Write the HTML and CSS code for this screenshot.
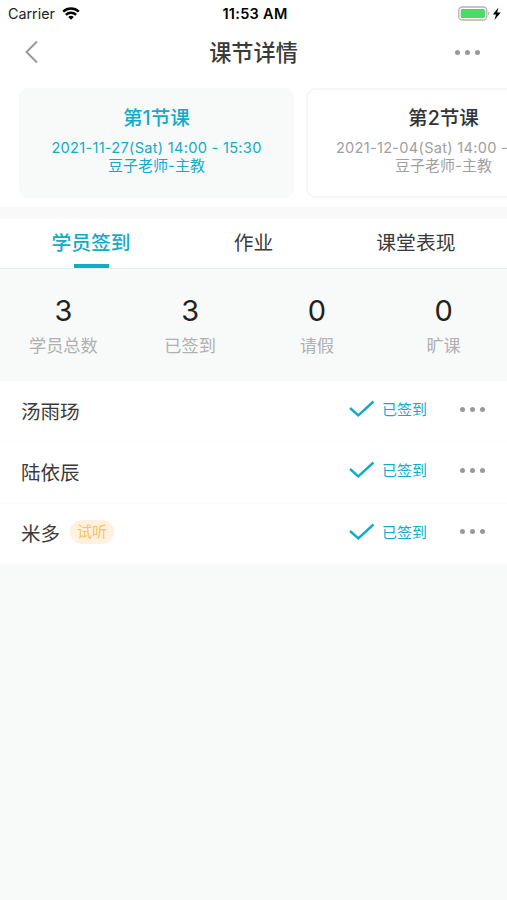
FILE: index.html
```html
<!DOCTYPE html>
<html lang="zh-CN">

<head>
  <meta charset="UTF-8">
  <meta name="viewport" content="width=device-width, initial-scale=1.0">
  <title>课节详情</title>
  <link rel="stylesheet" href="styles.css">
</head>

<body>
  <!-- Status bar -->
  <div class="status-bar">
    <div class="carrier">
      <span>Carrier</span>
      <svg class="wifi" width="18" height="13" viewBox="0 0 18 13" fill="none" stroke="#000" stroke-width="2.5">
        <path d="M1.200 4.700a11.300 11.300 0 0 1 15.600 0" />
        <path d="M3.900 7.800a7.400 7.400 0 0 1 10.200 0" />
        <path d="M9 12.800L6.200 10a4.100 4.100 0 0 1 5.600 0z" fill="#000" stroke="none" />
      </svg>
    </div>
    <div class="time">11:53 AM</div>
    <div class="battery">
      <svg width="44" height="16" viewBox="0 0 44 16">
        <rect x="0.8" y="1" width="28" height="13" rx="3.5" fill="#fff" stroke="#b4b4b4" stroke-width="1.3" />
        <rect x="2.7" y="2.9" width="24.2" height="9.2" rx="1.5" fill="#4cd964" />
        <path d="M30.2 5.3q2.2 2.2 0 4.4z" fill="#aaa" />
        <path d="M40.5 1.500L34.800 8.500h3.200l-1.500 5.500 6.200-7.500h-3.600z" fill="#000" />
      </svg>
    </div>
  </div>

  <!-- Navbar -->
  <div class="navbar">
    <a href="#" class="back">
      <svg width="14" height="24" viewBox="0 0 14 24" fill="none" stroke="#999" stroke-width="2">
        <path d="M13 1.500L2.500 12l10.500 10.500" />
      </svg>
    </a>
    <h1>课节详情</h1>
    <div class="dots"><i></i><i></i><i></i></div>
  </div>

  <!-- Lessons -->
  <div class="lessons">
    <div class="lesson active">
      <h2>第1节课</h2>
      <p>2021-11-27(Sat) 14:00 - 15:30</p>
      <p class="teacher">豆子老师-主教</p>
    </div>
    <div class="lesson">
      <h2>第2节课</h2>
      <p>2021-12-04(Sat) 14:00 - 15:30</p>
      <p class="teacher">豆子老师-主教</p>
    </div>
  </div>

  <!-- Tabs -->
  <div class="tabs">
    <div class="tab active">学员签到</div>
    <div class="tab">作业</div>
    <div class="tab">课堂表现</div>
  </div>

  <!-- Totals -->
  <div class="totals">
    <div class="total"><b>3</b><span>学员总数</span></div>
    <div class="total"><b>3</b><span>已签到</span></div>
    <div class="total"><b>0</b><span>请假</span></div>
    <div class="total"><b>0</b><span>旷课</span></div>
  </div>

  <!-- Students -->
  <div class="students">
    <div class="student">
      <span class="name">汤雨玚</span>
      <svg class="check" width="26" height="18" viewBox="0 0 26 18">
        <path d="M1 8L9.300 15.500L24.500 1.500" />
      </svg>
      <span class="state">已签到</span>
      <div class="dots"><i></i><i></i><i></i></div>
    </div>
    <div class="student">
      <span class="name">陆依辰</span>
      <svg class="check" width="26" height="18" viewBox="0 0 26 18">
        <path d="M1 8L9.300 15.500L24.500 1.500" />
      </svg>
      <span class="state">已签到</span>
      <div class="dots"><i></i><i></i><i></i></div>
    </div>
    <div class="student">
      <span class="name">米多</span>
      <span class="tag">试听</span>
      <svg class="check" width="26" height="18" viewBox="0 0 26 18">
        <path d="M1 8L9.300 15.500L24.500 1.500" />
      </svg>
      <span class="state">已签到</span>
      <div class="dots"><i></i><i></i><i></i></div>
    </div>
  </div>
</body>

</html>
```
FILE: styles.css
```css
* {
  box-sizing: border-box;
}

body {
  font-family: Inter, "Noto Sans CJK SC", sans-serif;
  margin: 0;
  background-color: #f8faf9;
  color: #3a3a3a;
  overflow: hidden;
}

h1,
h2,
p {
  margin: 0;
}

.status-bar {
  display: grid;
  grid-template-columns: 1fr auto 1fr;
  align-items: center;
  height: 27px;
  padding: 0 5px 0 8px;
  background-color: #fff;
  color: #000;
  font-size: 14.3px;
}

.carrier {
  display: flex;
  align-items: center;
  gap: 7px;
  color: #222;
}

.time {
  font-size: 14.5px;
  font-weight: 600;
  letter-spacing: 0.3px;
}

.battery {
  display: flex;
  justify-content: flex-end;
}

.navbar {
  display: flex;
  align-items: center;
  justify-content: space-between;
  height: 50px;
  padding: 0 27px 0 24px;
  background-color: #fff;
}

.navbar h1 {
  font-size: 22.2px;
  line-height: 32px;
  font-weight: 500;
  padding: 1px 0 0 14px;
}

.back {
  display: flex;
}

.dots {
  display: flex;
  gap: 5px;
}

.dots i {
  width: 5px;
  height: 5px;
  border-radius: 50%;
  background-color: #999;
}

.lessons {
  display: flex;
  gap: 12px;
  height: 130px;
  padding: 11px 0 9px 19px;
  background-color: #fff;
  overflow: hidden;
}

.lesson {
  flex: 0 0 275px;
  padding-top: 14px;
  border: 2px solid #f5f6f6;
  border-radius: 9px;
  text-align: center;
  color: #a0a0a0;
}

.lesson h2 {
  font-size: 19.6px;
  line-height: 28px;
  font-weight: 500;
  color: #333;
}

.lesson p {
  font-size: 14.6px;
  line-height: 18px;
  letter-spacing: 0.28px;
  margin-top: 7px;
}

.lesson .teacher {
  font-size: 15px;
  letter-spacing: 0;
  margin-top: 0;
}

.lesson.active {
  background-color: #f8faf9;
  border-color: #f8faf9;
}

.lesson.active,
.lesson.active h2 {
  color: #12abc8;
}

.tabs {
  display: flex;
  justify-content: space-around;
  height: 50px;
  margin-top: 12px;
  background-color: #fff;
  border-bottom: 1px solid #eceeee;
}

.tab {
  position: relative;
  font-size: 19.8px;
  line-height: 49px;
}

.tab.active {
  color: #12abc8;
  font-weight: 500;
}

.tab.active::after {
  content: "";
  position: absolute;
  left: 50%;
  bottom: 0;
  width: 35px;
  height: 4px;
  margin-left: -17px;
  background-color: #12abc8;
}

.totals {
  display: flex;
  height: 112px;
  padding-top: 24px;
}

.total {
  flex: 1;
  display: flex;
  flex-direction: column;
  align-items: center;
}

.total b {
  font-size: 29px;
  line-height: 36px;
  font-weight: 400;
  color: #222;
}

.total span {
  font-size: 17.2px;
  line-height: 26px;
  margin-top: 4px;
  color: #b0b0b0;
}

.students {
  background-color: #fff;
}

.student {
  display: flex;
  align-items: center;
  height: 61.3px;
  padding: 0 22px 4px 21px;
  border-bottom: 1px solid #fcfcfc;
}

.name {
  font-size: 19.5px;
  line-height: 30px;
  padding-top: 5px;
}

.tag {
  margin: 1px 0 0 10px;
  padding: 0 7px;
  border-radius: 12px;
  background-color: #fff1dd;
  color: #f0c469;
  font-size: 15px;
  line-height: 24px;
}

.check {
  margin-left: auto;
  fill: none;
  stroke: #12abc8;
  stroke-width: 2.4;
}

.state {
  width: 78px;
  margin-left: 7px;
  padding-top: 2px;
  font-size: 15px;
  line-height: 24px;
  color: #12abc8;
}
```
